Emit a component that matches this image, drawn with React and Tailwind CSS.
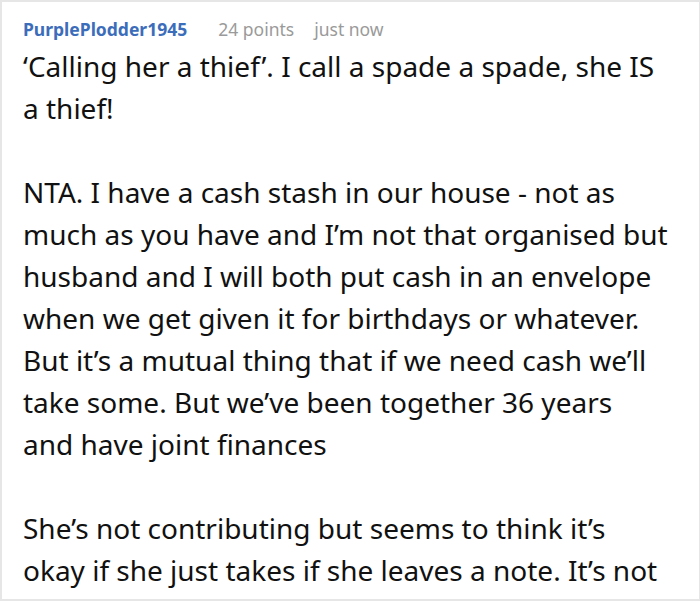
// Lines are broken where the original comment wraps
const PARAGRAPHS = [
  ['‘Calling her a thief’. I call a spade a spade, she IS', 'a thief!'],
  [
    'NTA. I have a cash stash in our house - not as',
    'much as you have and I’m not that organised but',
    'husband and I will both put cash in an envelope',
    'when we get given it for birthdays or whatever.',
    'But it’s a mutual thing that if we need cash we’ll',
    'take some. But we’ve been together 36 years',
    'and have joint finances',
  ],
  [
    'She’s not contributing but seems to think it’s',
    'okay if she just takes if she leaves a note. It’s not',
  ],
]

export default function App() {
  return (
    <div
      className="h-[601px] w-[700px] overflow-hidden bg-white border-t-2 border-l-2 border-b-2 border-r border-[#e6e6e6]"
      style={{ fontFamily: '"Noto Sans", "Open Sans", sans-serif' }}
    >
      <div className="pl-[21px] pr-[20px] pt-[15px]">
        {/* Comment meta */}
        <div className="flex items-baseline text-[17.5px] leading-[24px]">
          <span className="font-bold text-[#3c6dbb]">PurplePlodder1945</span>
          <span className="ml-[31px] text-[#9a9a9a]">24 points</span>
          <span className="ml-[20px] text-[#9a9a9a]">just now</span>
        </div>

        {/* Comment body */}
        <div className="mt-[4px] text-[28px] leading-[42px] text-[#111111]">
          {PARAGRAPHS.map((lines, i) => (
            <p key={i} className={i > 0 ? 'mt-[42px]' : ''}>
              {lines.map((l, j) => (
                <span key={j} className="block whitespace-nowrap">{l}</span>
              ))}
            </p>
          ))}
        </div>
      </div>
    </div>
  )
}
